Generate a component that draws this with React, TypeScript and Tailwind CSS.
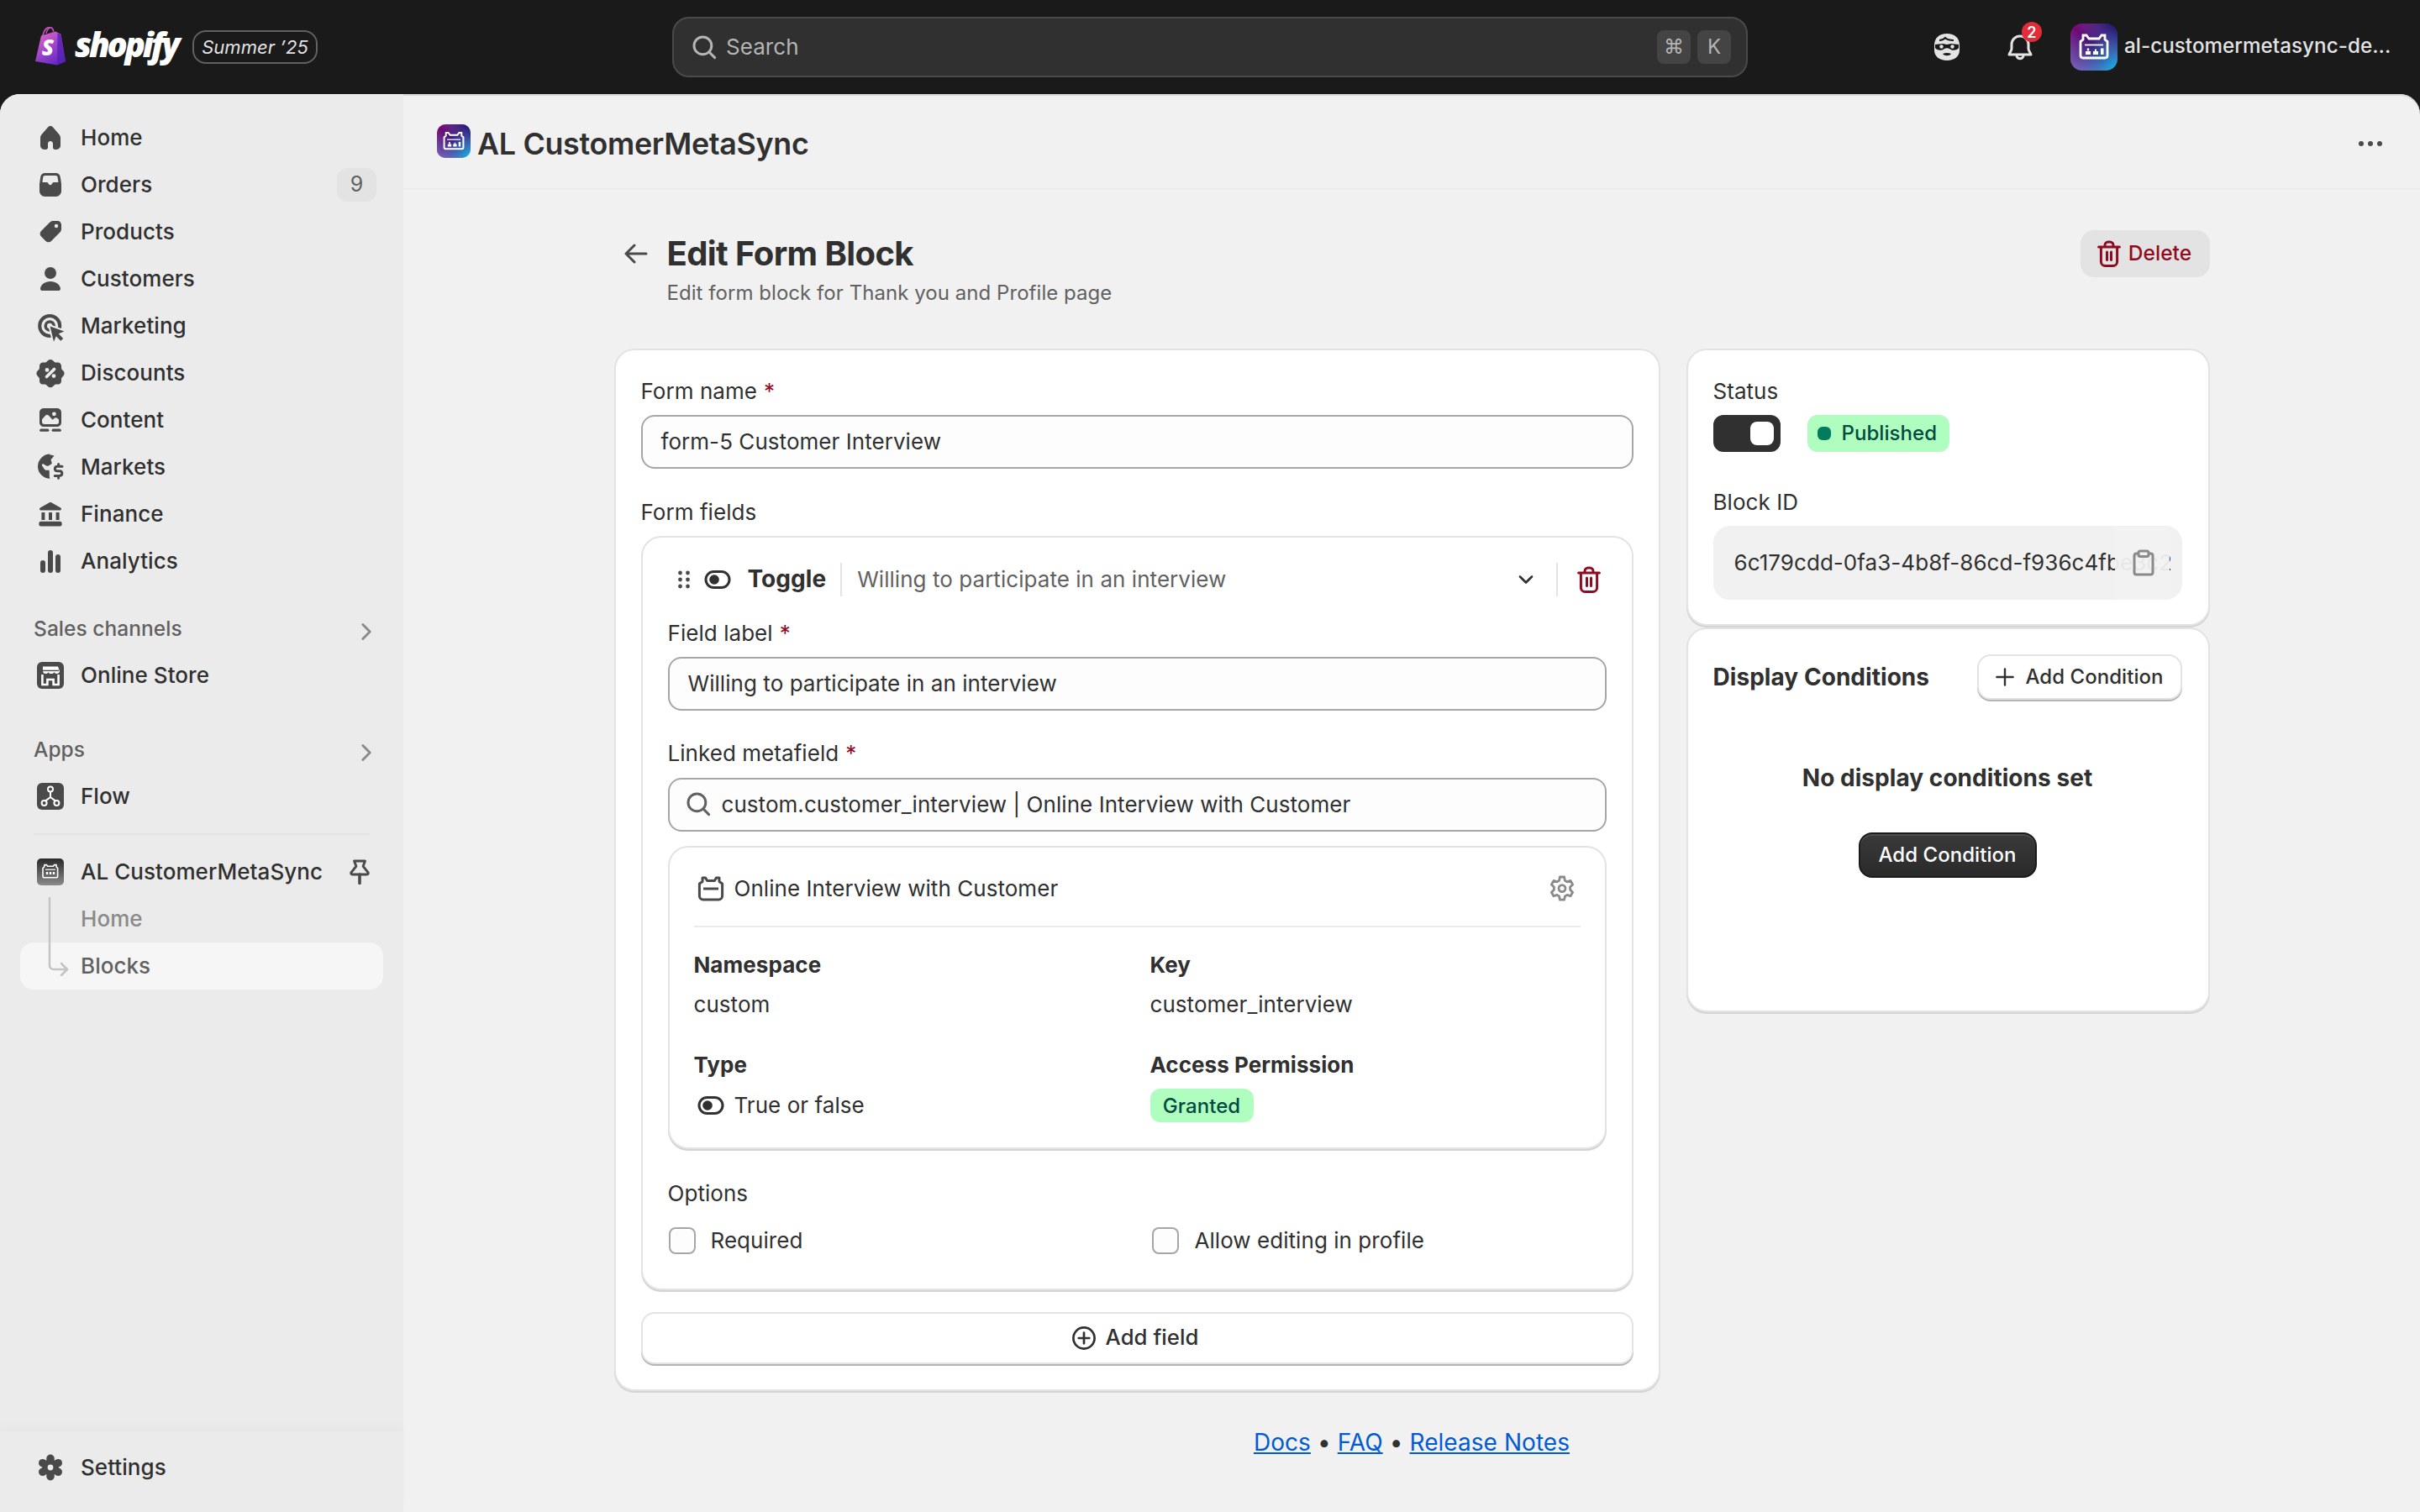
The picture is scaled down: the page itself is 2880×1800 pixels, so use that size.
import React from "react";

type P = { className?: string };
const Box = ({ className, children }: P & { children: React.ReactNode }) => (
  <svg viewBox="0 0 20 20" className={className ?? "w-[40px] h-[40px] shrink-0"} fill="currentColor">{children}</svg>
);

const HomeI = () => <Box><path d="M10 3c-.6 0-1.15.27-1.5.7L4.600 8.300C4.200 8.800 4 9.400 4 10v4.800C4 16 5 17 6.200 17h1.100c.65 0 1.200-.55 1.200-1.200v-2.300c0-.83.67-1.500 1.500-1.500s1.500.67 1.500 1.500v2.300c0 .65.55 1.200 1.200 1.200h1.100c1.200 0 2.200-1 2.200-2.200V10c0-.6-.2-1.200-.6-1.700l-3.900-4.600C11.150 3.270 10.600 3 10 3z" /></Box>;
const OrdersI = () => <Box><path fillRule="evenodd" d="M6.800 3h6.400c1.400 0 2.500 1 2.700 2.400l.6 4.100v4.300c0 1.800-1.400 3.200-3.200 3.200H6.700c-1.800 0-3.200-1.400-3.200-3.200V9.500l.6-4.100C4.300 4 5.400 3 6.800 3zm0 1.500c-.6 0-1.100.4-1.200 1l-.4 3h2.400c.5 0 .9.2 1.100.6l.3.5c.2.3.5.5.9.5h0c.4 0 .7-.2.9-.5l.3-.5c.2-.4.6-.6 1.100-.6h2.500l-.4-3c-.1-.6-.6-1-1.200-1H6.800z" /></Box>;
const TagI = () => <Box><path fillRule="evenodd" d="M11.600 3.500h2.700c1.200 0 2.200 1 2.200 2.200v2.700c0 .7-.3 1.400-.8 1.900l-5.200 5.200c-.9.9-2.400.9-3.300 0l-2.700-2.700c-.9-.9-.9-2.400 0-3.300l5.200-5.200c.5-.5 1.200-.8 1.900-.8zM13.500 5.400a1.100 1.100 0 1 0 0 2.200 1.100 1.100 0 0 0 0-2.200z" /></Box>;
const UserI = () => <Box><circle cx="10" cy="6.500" r="3.500" /><path d="M10 11.500c-3.300 0-5.700 1.900-6 4.200-.1.700.5 1.300 1.200 1.300h9.600c.7 0 1.300-.6 1.200-1.300-.3-2.300-2.700-4.200-6-4.200z" /></Box>;
const MarketingI = () => (
  <Box>
    <circle cx="9.600" cy="10" r="6" fill="none" stroke="currentColor" strokeWidth="2" />
    <circle cx="9.600" cy="10" r="2.500" fill="none" stroke="currentColor" strokeWidth="1.800" />
    <path d="M9.800 10.200l8.400 3-3.300 1.400 2.700 2.900-1.500 1.400-2.700-2.800-1.400 3.300z" fill="#ebebeb" stroke="#ebebeb" strokeWidth="2" strokeLinejoin="round" />
    <path d="M9.800 10.200l8.400 3-3.300 1.400 2.700 2.900-1.500 1.400-2.700-2.800-1.400 3.300z" />
  </Box>
);
const DiscountI = () => <Box><path fillRule="evenodd" d="M8.500 2.600c.8-.8 2.200-.8 3 0l.8.8c.3.3.6.4 1 .4h1.100c1.200 0 2.100.9 2.100 2.100v1.100c0 .4.1.7.4 1l.8.8c.8.8.8 2.200 0 3l-.8.8c-.3.3-.4.6-.4 1v1.100c0 1.200-.9 2.100-2.100 2.100h-1.100c-.4 0-.7.1-1 .4l-.8.8c-.8.8-2.200.8-3 0l-.8-.8c-.3-.3-.6-.4-1-.4H5.600c-1.200 0-2.100-.9-2.100-2.100v-1.100c0-.4-.1-.7-.4-1l-.8-.8c-.8-.8-.8-2.200 0-3l.8-.8c.3-.3.4-.6.4-1V5.900c0-1.200.9-2.100 2.100-2.100h1.100c.4 0 .7-.1 1-.4l.8-.8zM12.900 7.100a.9.900 0 0 0-1.300 0l-4.500 4.500a.9.900 0 1 0 1.300 1.300l4.500-4.500a.9.900 0 0 0 0-1.300zM8 7a1.200 1.200 0 1 0 0 2.400A1.200 1.200 0 0 0 8 7zm4 3.600a1.200 1.200 0 1 0 0 2.400 1.200 1.200 0 0 0 0-2.400z" /></Box>;
const ContentI = () => <Box><path fillRule="evenodd" d="M6 3h8c1.400 0 2.500 1.100 2.500 2.500v6c0 1.400-1.100 2.500-2.500 2.500H6c-1.400 0-2.500-1.100-2.500-2.500v-6C3.500 4.100 4.600 3 6 3zm6.200 2.200a1.200 1.200 0 1 0 0 2.400 1.200 1.200 0 0 0 0-2.400zM5 11.300c0 .8.7 1.200 1.300 1.200h7.400c.9 0 1.300-.6 1.300-1.200V9.800l-1-.9c-.5-.4-1.100-.4-1.600 0l-1.100 1-2.400-2.600c-.5-.5-1.300-.5-1.800 0L5 9.600v1.700z" /><rect x="3.600" y="15.300" width="5.600" height="1.600" rx=".8" /><rect x="10.800" y="15.300" width="5.600" height="1.600" rx=".8" /></Box>;
const MarketsI = () => <Box><path d="M9.500 2.700c1 0 2 .2 2.800.6L10.800 5c-.4.4-.6.7-.4 1.200l.4 1c.1.4 0 .8-.3 1l-1.600 1c-.4.2-.9.2-1.300 0l-1.700-1c-.6-.3-1.200.3-.9.9l1.400 2.200c.3.4.7.6 1.200.6h1.100c.5 0 .7.3.7.7v2.700c0 .6.1 1.200.4 1.600a7.300 7.300 0 1 1 0-14.600z" /><path fill="none" stroke="currentColor" strokeWidth="1.500" strokeLinecap="round" d="M17 9.600h-2.800c-.9 0-1.500.6-1.500 1.400s.6 1.400 1.500 1.400h1.200c.9 0 1.500.6 1.500 1.400s-.6 1.400-1.500 1.400h-2.800M14.800 8.300v1.300M14.800 15.200v1.400" /></Box>;
const FinanceI = () => <Box><path d="M9.200 3.200c.5-.3 1.100-.3 1.600 0l5.300 3.100c.7.400.4 1.500-.4 1.500H4.300c-.8 0-1.100-1.100-.4-1.500l5.300-3.100z" /><rect x="4.700" y="9" width="2" height="4.500" /><rect x="9" y="9" width="2" height="4.500" /><rect x="13.300" y="9" width="2" height="4.500" /><rect x="3.200" y="14.400" width="13.600" height="2.800" rx="1.100" /></Box>;
const AnalyticsI = () => <Box><rect x="4" y="9.500" width="3" height="7.500" rx="1.500" /><rect x="8.500" y="3.500" width="3" height="13.500" rx="1.500" /><rect x="13" y="6" width="3" height="11" rx="1.500" /></Box>;
const Chevron = () => (
  <svg viewBox="0 0 20 20" className="w-[24px] h-[24px]" fill="none" stroke="#8a8a8a" strokeWidth="2.400" strokeLinecap="round" strokeLinejoin="round"><path d="M6.500 3l7 7-7 7" /></svg>
);
const StoreTile = () => (
  <svg viewBox="0 0 20 20" className="w-[40px] h-[40px] shrink-0">
    <rect x="2" y="2" width="16" height="16" rx="3" fill="#4a4a4a" />
    <path d="M5.500 4.800h9l1 2.700c0 .9-.8 1.500-1.700 1.500-.7 0-1.300-.3-1.500-.9-.3.6-.9.9-1.600.9h-.4c-.7 0-1.300-.3-1.600-.9-.2.6-.8.9-1.500.9-.9 0-1.700-.6-1.700-1.500L5.500 4.800z" fill="#fff" />
    <path d="M5 7.200h10" stroke="#4a4a4a" strokeWidth=".7" />
    <path d="M5.200 9.500V15.500h3v-3h3.600v3h3V9.500" fill="none" stroke="#fff" strokeWidth="1.300" />
  </svg>
);
const FlowTile = () => (
  <svg viewBox="0 0 20 20" className="w-[40px] h-[40px] shrink-0">
    <rect x="2" y="2" width="16" height="16" rx="3" fill="#4a4a4a" />
    <g fill="none" stroke="#fff" strokeWidth="1">
      <circle cx="10" cy="5.800" r="1.500" /><circle cx="6.300" cy="14" r="1.500" /><circle cx="13.700" cy="14" r="1.500" />
      <path d="M10 7.300v3.200M10 10.500l-2.900 2.200M10 10.500l2.900 2.200" />
    </g>
  </svg>
);
const AppTileGrey = () => (
  <svg viewBox="0 0 20 20" className="w-[40px] h-[40px] shrink-0">
    <defs><linearGradient id="gr1" x1="0" y1="0" x2="0" y2="1"><stop offset="0" stopColor="#2a2a2a" /><stop offset="1" stopColor="#8a8a8a" /></linearGradient></defs>
    <rect x="2" y="2" width="16" height="16" rx="2.500" fill="url(#gr1)" />
    <path d="M6.500 5.800h1.200l.6.8h3.400l.6-.8h1.200v1.200l.8.7v4.800c0 .5-.4.9-.9.900H6.400c-.5 0-.9-.4-.9-.9V7.700l.8-.7z" fill="none" stroke="#fff" strokeWidth=".8" />
    <path d="M7 8.600h6" stroke="#fff" strokeWidth=".6" />
    <path d="M7.400 10h1.200v1.500H7.400zM9.400 10h1.200v1.500H9.400zM11.400 10h1.200v1.500h-1.200z" fill="#fff" />
  </svg>
);
const AppLogo = ({ id, size }: { id: string; size: string }) => (
  <svg viewBox="0 0 56 56" className={size + " shrink-0"}>
    <defs>
      <linearGradient id={id + "a"} x1="0" y1="0" x2="1" y2="1">
        <stop offset="0" stopColor="#87006e" />
        <stop offset=".45" stopColor="#3a1a7a" />
        <stop offset="1" stopColor="#14c0ee" />
      </linearGradient>
      <linearGradient id={id + "b"} x1="0" y1="1" x2="1" y2="0">
        <stop offset="0" stopColor="#8a6cc0" stopOpacity=".9" />
        <stop offset=".5" stopColor="#8a6cc0" stopOpacity="0" />
        <stop offset="1" stopColor="#0a0a60" stopOpacity=".95" />
      </linearGradient>
    </defs>
    <rect width="56" height="56" rx="14" fill={`url(#${id}a)`} />
    <rect width="56" height="56" rx="14" fill={`url(#${id}b)`} />
    <path d="M15 14h4l3 4h12l3-4h4v5l3 2.500V38c0 1.700-1.300 3-3 3H15c-1.700 0-3-1.300-3-3V21.500l3-2.500z" fill="none" stroke="#fff" strokeWidth="2.800" />
    <path d="M17 25.500h22" stroke="#fff" strokeWidth="1.800" />
    <path d="M18 33h6v4h-6zM19.800 29.500h2.400v3h-2.400zM27 33h6v4h-6zM29 30.500h2v2.500h-2zM36 29.500h3.500V37H36z" fill="#fff" />
  </svg>
);
const Pin = () => (
  <svg viewBox="0 0 20 20" className="w-[40px] h-[40px]" fill="none" stroke="#4a4a4a" strokeWidth="1.500" strokeLinejoin="round" strokeLinecap="round">
    <path d="M6.800 3.500h6.400c-.4 1.600-1 2.300-1.100 3.200l2.900 3.600c.3.500 0 1.200-.6 1.200H5.600c-.6 0-.9-.7-.6-1.200l2.900-3.600c-.1-.9-.7-1.600-1.100-3.200z" />
    <path d="M10 11.500v5.200" strokeWidth="1.800" />
  </svg>
);
const Gear = () => (
  <Box>
    <circle cx="10" cy="10" r="5" />
    <circle cx="10" cy="4.700" r="2.400" /><circle cx="10" cy="15.300" r="2.400" />
    <circle cx="5.400" cy="7.350" r="2.400" /><circle cx="14.600" cy="7.350" r="2.400" />
    <circle cx="5.400" cy="12.650" r="2.400" /><circle cx="14.600" cy="12.650" r="2.400" />
    <circle cx="10" cy="10" r="1.700" fill="#ebebeb" />
  </Box>
);
const ToggleI = () => (
  <svg viewBox="0 0 20 20" className="w-[40px] h-[40px] shrink-0" fill="none" stroke="currentColor" strokeWidth="1.500">
    <rect x="3" y="5.250" width="14" height="9.500" rx="4.750" />
    <circle cx="8" cy="10" r="2.900" fill="currentColor" stroke="none" />
  </svg>
);
const Trash = ({ cls }: { cls: string }) => (
  <svg viewBox="0 0 20 20" className={cls} fill="none" stroke="#8e0b21" strokeWidth="1.500" strokeLinecap="round" strokeLinejoin="round">
    <path d="M3.800 6h12.400M7.500 6V5c0-1.100.9-2 2-2h1c1.100 0 2 .9 2 2v1M5.200 6v8.700C5.200 16 6.300 17.200 7.700 17.200h4.600c1.400 0 2.500-1.200 2.500-2.500V6" />
    <path d="M8.750 9v4.800M11.250 9v4.800" />
  </svg>
);
const SearchI = ({ stroke }: { stroke: string }) => (
  <svg viewBox="0 0 20 20" className="w-[40px] h-[40px] shrink-0" fill="none" stroke={stroke} strokeWidth="1.500" strokeLinecap="round">
    <circle cx="9.200" cy="9.200" r="5.200" /><path d="M13 13l3.300 3.300" />
  </svg>
);
const MetaStore = () => (
  <svg viewBox="0 0 20 20" className="w-[40px] h-[40px] shrink-0" fill="none" stroke="#4a4a4a" strokeWidth="1.500" strokeLinejoin="round">
    <path d="M5 3.500h1.800l1 1.800h4.400l1-1.800H15v2.300l1.800 1.200V14.300c0 1.200-1 2.200-2.200 2.200H5.400c-1.200 0-2.200-1-2.200-2.200V7L5 5.800z" />
    <path d="M5.500 10h9" />
  </svg>
);
const GearOutline = () => (
  <svg viewBox="0 0 20 20" className="w-[40px] h-[40px] shrink-0" fill="none" stroke="#8a8a8a" strokeWidth="1.400" strokeLinejoin="round">
    <path d="M8.700 3h2.600l.4 2.100 1.300.8 2-.7 1.300 2.300-1.500 1.500v1.600l1.500 1.500-1.300 2.300-2-.7-1.300.8-.4 2.100H8.700l-.4-2.100-1.300-.8-2 .7-1.300-2.300 1.500-1.500V9.000L3.700 7.500l1.300-2.300 2 .7 1.300-.8.400-2.100z" />
    <circle cx="10" cy="9.800" r="2" />
  </svg>
);

function NavRow({ icon, label, children, className }: { icon: React.ReactNode; label: string; children?: React.ReactNode; className?: string }) {
  return (
    <div className={"mx-[24px] h-[56px] flex items-center gap-[16px] pl-[16px] pr-[8px] text-[#303030] " + (className ?? "")}>
      <span className="text-[#4a4a4a] flex">{icon}</span>
      <span className="flex-1 pb-[2px] text-[26px] font-[450] whitespace-nowrap">{label}</span>
      {children}
    </div>
  );
}

const SectionHead = ({ label, className }: { label: string; className?: string }) => (
  <div className={"h-[56px] flex items-center justify-between pl-[40px] pr-[32px] " + (className ?? "")}>
    <span className="text-[24.500px] font-[550] text-[#616161]">{label}</span>
    <span className="mt-[8px] flex"><Chevron /></span>
  </div>
);

const Label = ({ text, req, className }: { text: string; req?: boolean; className?: string }) => (
  <div className={"h-[40px] pb-[2px] flex items-center gap-[8px] text-[26px] text-[#303030] " + (className ?? "")}>
    <span>{text}</span>
    {req && <span className="text-[#8e0b21]">*</span>}
  </div>
);

const Input = ({ children, className }: { children: React.ReactNode; className?: string }) => (
  <div className={"h-[64px] pb-[2px] rounded-[16px] border-2 border-[#a6a6a6] bg-[#fdfdfd] flex items-center text-[26px] text-[#303030] whitespace-nowrap " + (className ?? "")}>{children}</div>
);

const cardCls = "bg-white rounded-[24px] border-2 border-[#e3e3e3] shadow-[0_2px_0_#d4d4d4]";

export default function App() {
  return (
    <div className="w-[2880px] h-[1800px] bg-[#1a1a1a] flex flex-col overflow-hidden tracking-[0.05px] [font-family:Inter,sans-serif]">
      <header className="h-[112px] shrink-0 flex items-center relative">
        <div className="flex items-center pl-[40px] w-[800px] shrink-0">
          <svg viewBox="0 0 40 46" className="w-[40px] h-[46px] shrink-0 mt-[-2px]">
            <defs>
              <linearGradient id="bag" x1="0.200" y1="0" x2="0.800" y2="1"><stop offset="0" stopColor="#e066c8" /><stop offset="1" stopColor="#5a22c8" /></linearGradient>
            </defs>
            <path d="M11 11c.6-5 3.300-10 7.500-10.500 2.800-.3 4.600 2 5.200 5.200" fill="none" stroke="#c050b8" strokeWidth="1.800" />
            <path d="M15 8c.5-3 2-6 5-7" fill="none" stroke="#c050b8" strokeWidth="1.400" />
            <path d="M9 10.500l17-5 6.500 3 5.500 32.500-10 4.500L2 41z" fill="url(#bag)" />
            <path d="M28 45.500l10-4.500-5.500-32.500-4-1z" fill="#5620b4" opacity=".8" />
            <text x="17" y="34" textAnchor="middle" fill="#fff" fontSize="26" fontWeight="800" fontStyle="italic" style={{ fontFamily: "Open Sans, sans-serif" }}>S</text>
          </svg>
          <span className="ml-[9px] w-[123px] text-[40px] leading-none font-extrabold italic tracking-[-3.200px] text-white mt-[-6px] [font-family:'Open_Sans',sans-serif]">shopify</span>
          <span className="ml-[17px] h-[40px] w-[149px] rounded-[16px] border-2 border-[#616161] flex items-center justify-center text-[22px] italic text-[#e3e3e3] whitespace-nowrap">Summer ’25</span>
        </div>
        <div className="w-[1280px] h-[72px] mt-[-1px] rounded-[20px] bg-[#303030] border-2 border-[#4a4a4a] flex items-center pl-[16px] pr-[18px]">
          <SearchI stroke="#b5b5b5" />
          <span className="ml-[6px] pb-[1px] flex-1 text-[26px] text-[#b5b5b5]">Search</span>
          <span className="w-[40px] h-[40px] rounded-[8px] bg-[#444444] text-[#b5b5b5] flex items-center justify-center text-[24px] [font-family:'DejaVu_Sans',sans-serif]">⌘</span>
          <span className="ml-[8px] w-[40px] h-[40px] rounded-[8px] bg-[#444444] text-[#b5b5b5] flex items-center justify-center text-[24px]">K</span>
        </div>
        <div className="flex items-center flex-1 min-w-0">
          <svg viewBox="0 0 32 34" className="w-[32px] h-[34px] ml-[221px] shrink-0">
            <path d="M16 1C7 1 1 6 1 15v6c0 7 6 12 15 12s15-5 15-12v-6C31 6 25 1 16 1z" fill="#e3e3e3" />
            <path d="M7 9c3 0 5-1 7-3 2 2 6 3 10 3" fill="none" stroke="#1a1a1a" strokeWidth="2" />
            <path d="M2 14c3 0 6-1 9-1 2 0 3 1 5 1s3-1 5-1c3 0 6 1 9 1v4c-2 3-8 4-11 1-2-1-4-1-6 0-3 3-9 2-11-1z" fill="#1a1a1a" />
            <circle cx="9.500" cy="16.500" r="2.200" fill="#e3e3e3" /><circle cx="22.500" cy="16.500" r="2.200" fill="#e3e3e3" />
            <path d="M11 25c3-1.500 7-1.500 10 0-2 3-8 3-10 0z" fill="#1a1a1a" />
          </svg>
          <div className="relative ml-[47px] w-[48px] h-[48px] shrink-0 flex items-center justify-center">
            <svg viewBox="0 0 20 20" className="w-[40px] h-[40px]" fill="none" stroke="#e3e3e3" strokeWidth="1.500" strokeLinejoin="round">
              <path d="M3.500 14.500c0-.8 1.500-2 1.500-3.500V8.500C5 5.700 7.200 3.500 10 3.500s5 2.200 5 5V11c0 1.500 1.500 2.700 1.500 3.500H3.500z" />
              <path d="M8 15c0 2.500 4 2.500 4 0" />
            </svg>
            <span className="absolute right-[-2px] top-[-6px] w-[24px] h-[24px] rounded-full bg-[#e22c38] text-white text-[18px] font-semibold flex items-center justify-center">2</span>
          </div>
          <span className="ml-[36px] flex"><AppLogo id="hd" size="w-[56px] h-[56px]" /></span>
          <span className="ml-[8px] pb-[2px] text-[24.200px] font-[450] text-[#e3e3e3] whitespace-nowrap">al-customermetasync-de...</span>
        </div>
      </header>

      <div className="flex-1 flex min-h-0 rounded-t-[24px] overflow-hidden bg-[#f1f1f1] shadow-[inset_0_2px_0_#d9d9d9]">
        <aside className="w-[480px] shrink-0 bg-[#ebebeb] flex flex-col pt-[24px]">
          <NavRow icon={<HomeI />} label="Home" />
          <NavRow icon={<OrdersI />} label="Orders">
            <span className="w-[47px] h-[40px] rounded-[12px] bg-[#e3e3e3] text-[#616161] text-[25px] flex items-center justify-center">9</span>
          </NavRow>
          <NavRow icon={<TagI />} label="Products" />
          <NavRow icon={<UserI />} label="Customers" />
          <NavRow icon={<MarketingI />} label="Marketing" />
          <NavRow icon={<DiscountI />} label="Discounts" />
          <NavRow icon={<ContentI />} label="Content" />
          <NavRow icon={<MarketsI />} label="Markets" />
          <NavRow icon={<FinanceI />} label="Finance" />
          <NavRow icon={<AnalyticsI />} label="Analytics" />
          <SectionHead label="Sales channels" className="mt-[24px]" />
          <NavRow icon={<StoreTile />} label="Online Store" />
          <SectionHead label="Apps" className="mt-[32px]" />
          <NavRow icon={<FlowTile />} label="Flow" />
          <div className="mx-[40px] mt-[16px] h-[2px] bg-[#e3e3e3]" />
          <NavRow icon={<AppTileGrey />} label="AL CustomerMetaSync" className="mt-[16px]">
            <Pin />
          </NavRow>
          <div className="relative">
            <svg viewBox="0 0 28 94" className="absolute left-[56px] top-[2px] w-[28px] h-[94px]" fill="none" stroke="#c4c4c4" strokeWidth="2.500" strokeLinecap="round" strokeLinejoin="round">
              <path d="M3 1v80c0 3 2 5 5 5h16M17 79l7 7-7 7" />
            </svg>
            <div className="pl-[96px] pb-[2px] h-[56px] flex items-center text-[26px] font-[450] text-[#8a8a8a]">Home</div>
            <div className="mx-[24px] pl-[72px] pb-[2px] h-[56px] rounded-[16px] bg-[#f6f6f6] flex items-center text-[26px] font-[550] text-[#616161]">Blocks</div>
          </div>
          <div className="flex-1" />
          <div className="h-[97px] pt-[15px] shadow-[0_-6px_10px_rgba(0,0,0,0.018)] border-t border-[#e6e6e6]">
            <NavRow icon={<Gear />} label="Settings" />
          </div>
        </aside>

        <main className="flex-1 min-w-0 flex flex-col">
          <div className="h-[114px] shrink-0 border-b-2 border-[#ebebeb] flex items-center pl-[40px] pr-[45px]">
            <AppLogo id="tt" size="w-[40px] h-[40px]" />
            <span className="ml-[8px] flex-1 text-[35.800px] font-[600] tracking-[-0.300px] text-[#303030] mt-[7px]">AL CustomerMetaSync</span>
            <span className="flex gap-[5px] mt-[5px]">
              <i className="w-[6px] h-[6px] rounded-full bg-[#4a4a4a]" />
              <i className="w-[6px] h-[6px] rounded-full bg-[#4a4a4a]" />
              <i className="w-[6px] h-[6px] rounded-full bg-[#4a4a4a]" />
            </span>
          </div>

          <div className="flex justify-center pt-[48px]">
            <div className="w-[1899px]">
              <div className="flex justify-between items-start h-[141px]">
                <div className="flex pl-[6px]">
                  <svg viewBox="0 0 20 20" className="w-[40px] h-[40px] mt-[8px] shrink-0" fill="none" stroke="#4a4a4a" strokeWidth="1.500" strokeLinecap="round" strokeLinejoin="round">
                    <path d="M16 10H4M9 5l-5 5 5 5" />
                  </svg>
                  <div className="ml-[17px]">
                    <div className="text-[40px] leading-[56px] font-[650] tracking-[-0.600px] text-[#303030]">Edit Form Block</div>
                    <div className="text-[24px] leading-[40px] mt-[-1px] text-[#616161]">Edit form block for Thank you and Profile page</div>
                  </div>
                </div>
                <button className="h-[56px] w-[154px] rounded-[16px] bg-[#e3e3e3] flex items-center justify-center gap-[3px] pb-[1px] pr-[3px] text-[24.500px] font-[550] text-[#8e0b21]">
                  <Trash cls="w-[40px] h-[40px] mt-[1px] ml-[-4px] shrink-0" />
                  Delete
                </button>
              </div>

              <div className="flex gap-[31px] items-start">
                <section className={cardCls + " w-[1245px] shrink-0 px-[30px] pt-[29px] pb-[30px]"}>
                  <Label text="Form name" req />
                  <Input className="mt-[8px] pl-[22px]">form-5 Customer Interview</Input>
                  <Label text="Form fields" className="mt-[32px]" />
                  <div className={cardCls + " mt-[8px] px-[30px] pt-[30px] pb-[41px]"}>
                    <div className="h-[40px] flex items-center">
                      <svg viewBox="0 0 14 22" className="w-[14px] h-[22px] ml-[12px] shrink-0" fill="#4a4a4a">
                        <circle cx="2.500" cy="3" r="2.400" /><circle cx="11.500" cy="3" r="2.400" />
                        <circle cx="2.500" cy="11" r="2.400" /><circle cx="11.500" cy="11" r="2.400" />
                        <circle cx="2.500" cy="19" r="2.400" /><circle cx="11.500" cy="19" r="2.400" />
                      </svg>
                      <span className="ml-[13px] flex text-[#303030]"><ToggleI /></span>
                      <span className="ml-[16px] pb-[2px] text-[28px] font-[650] text-[#303030]">Toggle</span>
                      <span className="ml-[17px] w-[2px] h-[40px] bg-[#e3e3e3]" />
                      <span className="ml-[18px] pb-[2px] flex-1 text-[26px] text-[#616161]">Willing to participate in an interview</span>
                      <svg viewBox="0 0 20 20" className="w-[28px] h-[28px] shrink-0" fill="none" stroke="#303030" strokeWidth="1.900" strokeLinecap="round" strokeLinejoin="round"><path d="M5 7.500l5 5 5-5" /></svg>
                      <span className="ml-[22px] w-[2px] h-[40px] bg-[#e3e3e3]" />
                      <span className="ml-[17px] mr-[1px] flex"><Trash cls="w-[40px] h-[40px] shrink-0" /></span>
                    </div>
                    <Label text="Field label" req className="mt-[24px]" />
                    <Input className="mt-[8px] pl-[22px]">Willing to participate in an interview</Input>
                    <Label text="Linked metafield" req className="mt-[31px]" />
                    <Input className="mt-[9px] pl-[14px]">
                      <SearchI stroke="#616161" />
                      <span className="ml-[8px]">custom.customer_interview | Online Interview with Customer</span>
                    </Input>
                    <div className={cardCls + " mt-[17px] px-[29px] pt-[29px] pb-[30px]"}>
                      <div className="h-[40px] flex items-center">
                        <MetaStore />
                        <span className="ml-[8px] pb-[2px] flex-1 text-[26px] text-[#303030]">Online Interview with Customer</span>
                        <span className="flex mr-[2px]"><GearOutline /></span>
                      </div>
                      <div className="mt-[24px] h-[2px] bg-[#ebebeb]" />
                      <div className="grid grid-cols-[543px_1fr] mt-[25px] text-[26px] text-[#303030]">
                        <div className="h-[40px] pb-[2px] flex items-center font-[650]">Namespace</div>
                        <div className="h-[40px] pb-[2px] flex items-center font-[650]">Key</div>
                        <div className="h-[40px] pb-[2px] mt-[7px] flex items-center">custom</div>
                        <div className="h-[40px] pb-[2px] mt-[7px] flex items-center">customer_interview</div>
                        <div className="h-[40px] pb-[2px] mt-[32px] flex items-center font-[650]">Type</div>
                        <div className="h-[40px] pb-[2px] mt-[32px] flex items-center font-[650]">Access Permission</div>
                        <div className="h-[40px] mt-[8px] flex items-center">
                          <ToggleI /><span className="ml-[8px] pb-[1px]">True or false</span>
                        </div>
                        <div className="h-[40px] mt-[8px] flex items-center">
                          <span className="h-[40px] w-[123px] pt-[2px] rounded-[12px] bg-[#affebf] text-[#014b40] text-[24px] font-[450] flex items-center justify-center">Granted</span>
                        </div>
                      </div>
                    </div>
                    <Label text="Options" className="mt-[33px]" />
                    <div className="grid grid-cols-[576px_1fr] mt-[20px] text-[26px] text-[#303030]">
                      <div className="flex items-center h-[32px]">
                        <span className="w-[32px] h-[32px] rounded-[8px] border-2 border-[#a6a6a6] bg-[#fdfdfd] ml-[1px]" />
                        <span className="ml-[18px] pb-[2px]">Required</span>
                      </div>
                      <div className="flex items-center h-[32px]">
                        <span className="w-[32px] h-[32px] rounded-[8px] border-2 border-[#a6a6a6] bg-[#fdfdfd]" />
                        <span className="ml-[19px] pb-[2px]">Allow editing in profile</span>
                      </div>
                    </div>
                  </div>
                  <button className="mt-[26px] w-full h-[62px] pb-[2px] pr-[8px] rounded-[16px] bg-white border-2 border-[#e3e3e3] shadow-[0_2px_0_#b5b5b5] flex items-center justify-center text-[25.700px] font-[550] text-[#303030]">
                    <svg viewBox="0 0 20 20" className="w-[36px] h-[36px] mr-[8px] mt-[2px]" fill="none" stroke="#303030" strokeWidth="1.500" strokeLinecap="round">
                      <circle cx="10" cy="10" r="7" /><path d="M10 6.500v7M6.500 10h7" />
                    </svg>
                    Add field
                  </button>
                </section>

                <div className="w-[623px] shrink-0 flex flex-col">
                  <section className={cardCls + " pl-[30px] pr-[31px] pt-[29px] pb-[29px]"}>
                    <Label text="Status" />
                    <div className="mt-[8px] flex items-center">
                      <span className="w-[80px] h-[44px] rounded-[12px] bg-[#303030] flex items-center justify-end pr-[8px]">
                        <i className="w-[28px] h-[28px] rounded-[8px] bg-white" />
                      </span>
                      <span className="ml-[32px] w-[169px] h-[44px] rounded-[12px] bg-[#affebf] flex items-center text-[24px] font-[450] text-[#014b40]">
                        <i className="ml-[12px] w-[16px] h-[16px] rounded-[6px] bg-[#047b5d]" />
                        <span className="ml-[13px]">Published</span>
                      </span>
                    </div>
                    <Label text="Block ID" className="mt-[40px]" />
                    <div className="relative mt-[8px] h-[88px] rounded-[20px] bg-[#f1f1f1] flex items-center overflow-hidden">
                      <span className="ml-[25px] pb-[2px] w-[519px] overflow-hidden whitespace-nowrap text-[26px] text-[#303030]">6c179cdd-0fa3-4b8f-86cd-f936c4fbe3c2</span>
                      <span className="absolute right-[15px] top-0 bottom-0 w-[65px] bg-[#f1f1f1]/95 flex items-center">
                        <svg viewBox="0 0 20 20" className="w-[40px] h-[40px] ml-[14px]" fill="none" stroke="#8a8a8a" strokeWidth="1.500" strokeLinejoin="round">
                          <path d="M7 4.500H5.800c-.8 0-1.300.5-1.300 1.300v9.900c0 .8.500 1.300 1.300 1.300h8.400c.8 0 1.300-.5 1.300-1.300V5.800c0-.8-.5-1.300-1.300-1.300H13" />
                          <rect x="7" y="3" width="6" height="3.200" rx="1" />
                        </svg>
                      </span>
                    </div>
                  </section>
                  <section className={cardCls + " mt-[2px] h-[458px] pl-[30px] pr-[31px] pt-[30px]"}>
                    <div className="flex items-center justify-between h-[54px]">
                      <span className="pb-[1px] text-[28px] font-[650] text-[#303030]">Display Conditions</span>
                      <button className="h-[54px] w-[244px] pb-[1px] pr-[4px] rounded-[16px] bg-white border-2 border-[#e3e3e3] shadow-[0_2px_0_#b5b5b5] flex items-center justify-center text-[24px] font-[550] text-[#303030]">
                        <svg viewBox="0 0 20 20" className="w-[32px] h-[32px] mr-[8px] mt-[1px] shrink-0" fill="none" stroke="#303030" strokeWidth="1.500" strokeLinecap="round"><path d="M10 4v12M4 10h12" /></svg>
                        Add Condition
                      </button>
                    </div>
                    <div className="mt-[73px] h-[40px] flex items-center justify-center text-[28px] font-[650] text-[#303030]">No display conditions set</div>
                    <div className="mt-[45px] flex justify-center">
                      <button className="h-[54px] w-[212px] pb-[1px] rounded-[16px] bg-gradient-to-b from-[#3a3a3a] to-[#2a2a2a] border-2 border-[#1a1a1a] shadow-[inset_0_2px_0_#4d4d4d] flex items-center justify-center text-[24px] font-[550] text-white">Add Condition</button>
                    </div>
                  </section>
                </div>
              </div>

              <div className="mt-[41px] flex justify-center items-center gap-[8px] text-[28px] h-[40px] text-[#303030]">
                <a className="text-[#005bd3] underline">Docs</a>
                <span>•</span>
                <a className="text-[#005bd3] underline">FAQ</a>
                <span>•</span>
                <a className="text-[#005bd3] underline">Release Notes</a>
              </div>
            </div>
          </div>
        </main>
      </div>
    </div>
  );
}
